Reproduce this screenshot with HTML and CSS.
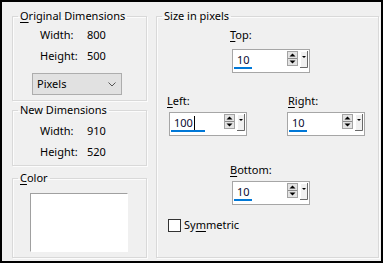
FILE: index.html
```html
<!DOCTYPE html>
<html>
<head>
<meta charset="utf-8">
<link rel="stylesheet" href="styles.css">
</head>
<body>
<div class="dialog">
  <div class="left-col">
    <fieldset class="group g-orig">
      <legend><u>O</u>riginal Dimensions</legend>
      <div class="dim-row"><span class="dim-label">Width:</span><span class="dim-val">800</span></div>
      <div class="dim-row"><span class="dim-label">Height:</span><span class="dim-val">500</span></div>
      <div class="select">
        <span class="select-text">Pixels</span>
        <svg class="chev" width="8" height="5" viewBox="0 0 8 5"><polyline points="0.5,0.5 4,4 7.5,0.5" fill="none" stroke="#555" stroke-width="1"/></svg>
      </div>
    </fieldset>
    <fieldset class="group g-new">
      <legend>New Dimensions</legend>
      <div class="dim-row"><span class="dim-label">Width:</span><span class="dim-val">910</span></div>
      <div class="dim-row"><span class="dim-label">Height:</span><span class="dim-val">520</span></div>
    </fieldset>
    <fieldset class="group g-color">
      <legend><u>C</u>olor</legend>
      <div class="swatch"></div>
    </fieldset>
  </div>
  <fieldset class="group g-size">
    <legend>Size in pixels</legend>
    <div class="field f-top">
      <div class="f-label"><u>T</u>op:</div>
      <div class="spin">
        <div class="sp-field"><div class="sp-val">10</div><div class="sp-bar" style="width:18px"></div></div>
        <svg class="sp-arrows" width="11" height="15" viewBox="0 0 11 15"><rect x="0.5" y="0.5" width="10" height="14" fill="#e3e3e3" stroke="#a3a3a3"/><line x1="1" y1="7.5" x2="10" y2="7.5" stroke="#8a8a8a"/><polygon points="2.5,5.5 8.5,5.5 5.5,2.5" fill="#000"/><polygon points="2.5,9.5 8.5,9.5 5.5,12.5" fill="#000"/></svg>
        <svg class="sp-drop" width="8" height="17" viewBox="0 0 8 17"><rect x="0" y="0" width="8" height="17" fill="#f0f0f0"/><path d="M0.5 16.5V0.5H7" fill="none" stroke="#fff"/><path d="M7.5 0V16.5H0" fill="none" stroke="#696969"/><polygon points="2,5 6,5 4,7" fill="#000"/></svg>
      </div>
    </div>
    <div class="side-row">
      <div class="field f-left">
        <div class="f-label"><u>L</u>eft:</div>
        <div class="spin">
          <div class="sp-field"><div class="sp-val">100<span class="caret"></span></div><div class="sp-bar" style="width:34px"></div></div>
          <svg class="sp-arrows" width="11" height="15" viewBox="0 0 11 15"><rect x="0.5" y="0.5" width="10" height="14" fill="#e3e3e3" stroke="#a3a3a3"/><line x1="1" y1="7.5" x2="10" y2="7.5" stroke="#8a8a8a"/><polygon points="2.5,5.5 8.5,5.5 5.5,2.5" fill="#000"/><polygon points="2.5,9.5 8.5,9.5 5.5,12.5" fill="#000"/></svg>
          <svg class="sp-drop" width="8" height="17" viewBox="0 0 8 17"><rect x="0" y="0" width="8" height="17" fill="#f0f0f0"/><path d="M0.5 16.5V0.5H7" fill="none" stroke="#fff"/><path d="M7.5 0V16.5H0" fill="none" stroke="#696969"/><polygon points="2,5 6,5 4,7" fill="#000"/></svg>
        </div>
      </div>
      <div class="field f-right">
        <div class="f-label"><u>R</u>ight:</div>
        <div class="spin">
          <div class="sp-field"><div class="sp-val">10</div><div class="sp-bar" style="width:18px"></div></div>
          <svg class="sp-arrows" width="11" height="15" viewBox="0 0 11 15"><rect x="0.5" y="0.5" width="10" height="14" fill="#e3e3e3" stroke="#a3a3a3"/><line x1="1" y1="7.5" x2="10" y2="7.5" stroke="#8a8a8a"/><polygon points="2.5,5.5 8.5,5.5 5.5,2.5" fill="#000"/><polygon points="2.5,9.5 8.5,9.5 5.5,12.5" fill="#000"/></svg>
          <svg class="sp-drop" width="8" height="17" viewBox="0 0 8 17"><rect x="0" y="0" width="8" height="17" fill="#f0f0f0"/><path d="M0.5 16.5V0.5H7" fill="none" stroke="#fff"/><path d="M7.5 0V16.5H0" fill="none" stroke="#696969"/><polygon points="2,5 6,5 4,7" fill="#000"/></svg>
        </div>
      </div>
    </div>
    <div class="field f-bottom">
      <div class="f-label"><u>B</u>ottom:</div>
      <div class="spin">
        <div class="sp-field"><div class="sp-val">10</div><div class="sp-bar" style="width:18px"></div></div>
        <svg class="sp-arrows" width="11" height="15" viewBox="0 0 11 15"><rect x="0.5" y="0.5" width="10" height="14" fill="#e3e3e3" stroke="#a3a3a3"/><line x1="1" y1="7.5" x2="10" y2="7.5" stroke="#8a8a8a"/><polygon points="2.5,5.5 8.5,5.5 5.5,2.5" fill="#000"/><polygon points="2.5,9.5 8.5,9.5 5.5,12.5" fill="#000"/></svg>
        <svg class="sp-drop" width="8" height="17" viewBox="0 0 8 17"><rect x="0" y="0" width="8" height="17" fill="#f0f0f0"/><path d="M0.5 16.5V0.5H7" fill="none" stroke="#fff"/><path d="M7.5 0V16.5H0" fill="none" stroke="#696969"/><polygon points="2,5 6,5 4,7" fill="#000"/></svg>
      </div>
    </div>
    <div class="check-row">
      <span class="checkbox"></span>
      <span class="check-label">Sy<u>m</u>metric</span>
    </div>
  </fieldset>
</div>
</body>
</html>
```

FILE: styles.css
```css
html, body {
  margin: 0;
  padding: 0;
  background: #ffffff;
}

body {
  font-family: "Noto Sans", "Open Sans", sans-serif;
  font-size: 11px;
  color: #000;
}

.dialog {
  width: 383px;
  height: 263px;
  box-sizing: border-box;
  border: 2px solid #000;
  background: #f0f0f0;
  display: flex;
  align-items: flex-start;
  gap: 9px;
  padding: 6px 2px 0 10px;
}

.left-col {
  width: 135px;
  display: flex;
  flex-direction: column;
}

.group {
  margin: 0;
  padding: 0;
  min-width: 0;
  box-sizing: border-box;
  border: 1px solid #d9d9d9;
  box-shadow: inset 1px 1px 0 #fcfcfc, 1px 1px 0 #fcfcfc;
}

.group legend {
  margin-left: 5px;
  padding: 0 2px;
  line-height: 16px;
  height: 16px;
  white-space: nowrap;
}

u {
  text-decoration: underline;
  text-decoration-thickness: 1px;
  text-underline-offset: 2px;
}

.g-orig {
  height: 93px;
}

.g-new {
  height: 64px;
  margin-top: 1px;
  padding-top: 2px;
}

.g-color {
  height: 88px;
  margin-top: 4px;
  padding-top: 7px;
}

.dim-row {
  display: flex;
  line-height: 21px;
  padding-left: 27px;
}

.dim-label {
  width: 47px;
}

.select {
  margin: 7px 0 0 19px;
  width: 90px;
  height: 22px;
  box-sizing: border-box;
  border: 1px solid #adadad;
  background: #e1e1e1;
  display: flex;
  align-items: center;
  justify-content: space-between;
  padding: 0 5px 0 4px;
}

.select-text {
  line-height: 16px;
}

.swatch {
  margin-left: 17px;
  width: 98px;
  height: 59px;
  box-sizing: border-box;
  background: #fff;
  border: 1px solid;
  border-color: #a0a0a0 #fff #fff #a0a0a0;
}

.g-size {
  width: 223px;
  height: 250px;
  display: flex;
  flex-direction: column;
  align-items: flex-start;
}

.field {
  display: flex;
  flex-direction: column;
}

.f-label {
  line-height: 16px;
  margin-left: -2px;
}

.f-top {
  margin: 3px 0 0 75px;
}

.f-top .spin {
  margin-top: 6px;
}

.side-row {
  display: flex;
  gap: 40px;
  margin: 20px 0 0 12px;
}

.f-left .spin,
.f-right .spin,
.f-bottom .spin {
  margin-top: 3px;
}

.f-right .f-label {
  margin-left: 1px;
}

.f-bottom {
  margin: 26px 0 0 75px;
}

.spin {
  width: 78px;
  height: 24px;
  box-sizing: border-box;
  border: 1px solid #a6a6a6;
  background: #fff;
  display: flex;
  align-items: flex-start;
  gap: 2px;
  padding-right: 1px;
}

.sp-field {
  flex: 1;
  display: flex;
  flex-direction: column;
  padding-left: 1px;
}

.sp-val {
  margin-top: 2px;
  padding-left: 3px;
  line-height: 15px;
  height: 15px;
  display: flex;
  align-items: center;
  color: #0a0a30;
}

.caret {
  display: inline-block;
  width: 1px;
  height: 14px;
  background: #000;
  margin-left: 1px;
}

.sp-bar {
  height: 2px;
  background: #0078d7;
}

.sp-arrows {
  display: block;
  margin-top: 1px;
}

.sp-drop {
  display: block;
  margin-top: 1px;
}

.check-row {
  display: flex;
  align-items: center;
  gap: 3px;
  margin: 12px 0 0 11px;
  line-height: 16px;
}

.checkbox {
  width: 13px;
  height: 13px;
  box-sizing: border-box;
  border: 1px solid #333;
  background: #fff;
}
```
